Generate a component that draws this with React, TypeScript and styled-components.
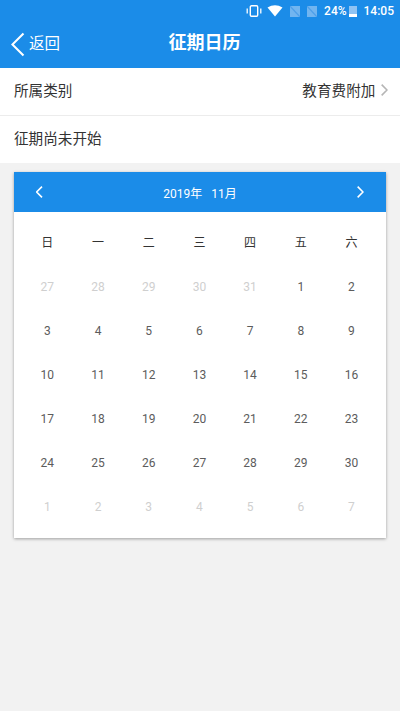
import React from 'react'
import styled, { createGlobalStyle } from 'styled-components'

const GlobalStyle = createGlobalStyle`
  html, body {
    margin: 0;
    padding: 0;
    background: #f2f2f2;
  }
  body {
    font-family: Roboto, "Noto Sans CJK SC", sans-serif;
  }
`

const WEEK = ['日', '一', '二', '三', '四', '五', '六']
const PREV = [27, 28, 29, 30, 31]
const DAYS = Array.from({ length: 30 }, (_, i) => i + 1)
const NEXT = [1, 2, 3, 4, 5, 6, 7]

function Chevron({ dir, size, color, width }: { dir: 'left' | 'right'; size: number; color: string; width: number }) {
  const d = dir === 'left' ? 'M9 1 L1 9 L9 17' : 'M1 1 L9 9 L1 17'
  return (
    <svg width={size * 10 / 18} height={size} viewBox="0 0 10 18" fill="none">
      <path d={d} stroke={color} strokeWidth={width} />
    </svg>
  )
}

function SimIcon() {
  return (
    <svg width="10" height="11" viewBox="0 0 10 11">
      <path d="M0 0h10v11H0z" fill="#8fc3f3" opacity="0.75" />
      <path d="M0 0l10 11" stroke="#4d9fea" strokeWidth="1.2" />
    </svg>
  )
}

function StatusIcons() {
  return (
    <>
      <svg width="16" height="12" viewBox="0 0 16 12" fill="none">
        <rect x="4.3" y="0.8" width="7.4" height="10.4" rx="1.2" stroke="#fff" strokeWidth="1.4" />
        <path d="M1.2 3.5v5M14.8 3.5v5" stroke="#fff" strokeWidth="1.3" />
      </svg>
      <WifiGap>
        <svg width="16" height="12" viewBox="0 0 15 12">
          <path d="M0 2.5 Q7.5 -1.8 15 2.5 L7.5 11.5 Z" fill="#fff" />
        </svg>
      </WifiGap>
      <SimIcon />
      <SimIcon />
    </>
  )
}

export default function App() {
  return (
    <Page>
      <GlobalStyle />
      <Header>
        <StatusBar>
          <StatusGroup>
            <StatusIcons />
          </StatusGroup>
          <Percent>24%</Percent>
          <Battery />
          <Clock>14:05</Clock>
        </StatusBar>
        <NavBar>
          <BackLink>
            <Chevron dir="left" size={25} color="#fff" width={1.5} />
            <BackText>返回</BackText>
          </BackLink>
          <Title>征期日历</Title>
        </NavBar>
      </Header>
      <InfoList>
        <InfoRow>
          <span>所属类别</span>
          <InfoValue>
            教育费附加
            <Chevron dir="right" size={12} color="#b5b5b5" width={2.4} />
          </InfoValue>
        </InfoRow>
        <InfoRow>
          <span>征期尚未开始</span>
        </InfoRow>
      </InfoList>
      <Calendar>
        <CalendarHead>
          <Chevron dir="left" size={12} color="#fff" width={2.4} />
          <MonthLabel>2019年&nbsp;&nbsp;&nbsp;11月</MonthLabel>
          <Chevron dir="right" size={12} color="#fff" width={2.4} />
        </CalendarHead>
        <Grid>
          {WEEK.map(w => (
            <WeekCell key={w}>{w}</WeekCell>
          ))}
          {PREV.map(d => (
            <DayCell key={`p${d}`} $muted>{d}</DayCell>
          ))}
          {DAYS.map(d => (
            <DayCell key={d}>{d}</DayCell>
          ))}
          {NEXT.map(d => (
            <DayCell key={`n${d}`} $muted>{d}</DayCell>
          ))}
        </Grid>
      </Calendar>
    </Page>
  )
}

const Page = styled.div`
  width: 400px;
  height: 711px;
  overflow: hidden;
  background: #f2f2f2;
`

const Header = styled.header`
  height: 68px;
  background: #1b8ce8;
  color: #fff;
`

const StatusBar = styled.div`
  height: 22px;
  display: flex;
  align-items: center;
  justify-content: flex-end;
  padding-right: 6px;
  font-size: 12px;
`

const StatusGroup = styled.div`
  display: flex;
  align-items: center;
  gap: 7px;
  margin-right: 7px;
`

const WifiGap = styled.span`
  display: flex;
  margin: 0 0 0 -2px;
`

const Percent = styled.span`
  font-weight: 500;
`

const Battery = styled.span`
  width: 8px;
  height: 11px;
  margin: 0 7px 0 2px;
  background: linear-gradient(to top, #fff 30%, #8fc3f3 30%);
`

const Clock = styled.span`
  font-weight: 500;
`

const NavBar = styled.div`
  position: relative;
  height: 46px;
  display: flex;
  align-items: center;
  justify-content: center;
  padding: 0 0 8px 9px;
  box-sizing: border-box;
`

const BackLink = styled.div`
  position: absolute;
  left: 11px;
  top: 10px;
  display: flex;
  align-items: center;
  gap: 4px;
`

const BackText = styled.span`
  font-size: 15.5px;
  line-height: 25px;
`

const Title = styled.h1`
  margin: 0;
  font-size: 18px;
  font-weight: 700;
`

const InfoList = styled.section`
  background: #fff;
`

const InfoRow = styled.div`
  height: 47px;
  box-sizing: content-box;
  display: flex;
  align-items: center;
  justify-content: space-between;
  padding: 0 12px 0 14px;
  font-size: 14.6px;
  color: #333;

  & > span {
    position: relative;
    top: -2px;
  }

  & + & {
    border-top: 1px solid #ececec;
  }
`

const InfoValue = styled.span`
  display: flex;
  align-items: center;
  gap: 6px;
`

const Calendar = styled.section`
  width: 372px;
  height: 366px;
  margin: 9px 0 0 14px;
  background: #fff;
  box-shadow: 0 1px 3px rgba(0, 0, 0, 0.35);
`

const CalendarHead = styled.div`
  height: 40px;
  display: flex;
  align-items: center;
  justify-content: space-between;
  padding: 0 22px;
  background: #1b8ce8;
`

const MonthLabel = styled.span`
  font-size: 12px;
  color: #fff;
`

const Grid = styled.div`
  display: grid;
  grid-template-columns: repeat(7, 50.7px);
  grid-auto-rows: 44px;
  padding: 9px 0 0 8px;
`

const WeekCell = styled.div`
  display: flex;
  align-items: center;
  justify-content: center;
  padding-bottom: 4px;
  font-size: 12px;
  color: #333;
`

const DayCell = styled.div<{ $muted?: boolean }>`
  display: flex;
  align-items: center;
  justify-content: center;
  font-size: 12px;
  color: ${p => (p.$muted ? '#cfcfcf' : '#5c5c5c')};
`
